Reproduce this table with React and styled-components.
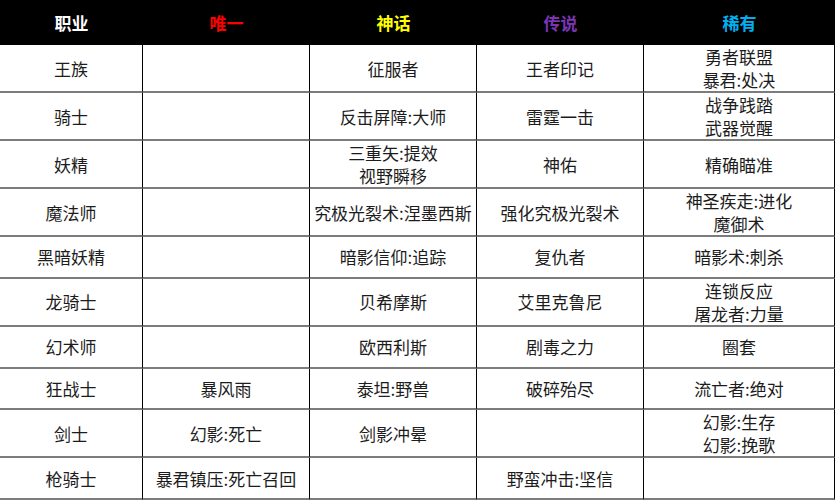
import React from 'react'
import styled, { createGlobalStyle } from 'styled-components'

const GlobalStyle = createGlobalStyle`
  html, body {
    margin: 0;
    padding: 0;
    background: #fff;
  }
  body {
    font-family: "Noto Sans CJK SC", "Liberation Sans", sans-serif;
  }
`

const headers = [
  { label: '职业', color: '#ffffff' },
  { label: '唯一', color: '#ff0000' },
  { label: '神话', color: '#ffff00' },
  { label: '传说', color: '#7a34b4' },
  { label: '稀有', color: '#00b0f0' }
]

const rows = [
  ['王族', '', '征服者', '王者印记', ['勇者联盟', '暴君:处决']],
  ['骑士', '', '反击屏障:大师', '雷霆一击', ['战争践踏', '武器觉醒']],
  ['妖精', '', ['三重矢:提效', '视野瞬移'], '神佑', '精确瞄准'],
  ['魔法师', '', '究极光裂术:涅墨西斯', '强化究极光裂术', ['神圣疾走:进化', '魔御术']],
  ['黑暗妖精', '', '暗影信仰:追踪', '复仇者', '暗影术:刺杀'],
  ['龙骑士', '', '贝希摩斯', '艾里克鲁尼', ['连锁反应', '屠龙者:力量']],
  ['幻术师', '', '欧西利斯', '剧毒之力', '圈套'],
  ['狂战士', '暴风雨', '泰坦:野兽', '破碎殆尽', '流亡者:绝对'],
  ['剑士', '幻影:死亡', '剑影冲晕', '', ['幻影:生存', '幻影:挽歌']],
  ['枪骑士', '暴君镇压:死亡召回', '', '野蛮冲击:坚信', '']
]

export default function App() {
  return (
    <>
      <GlobalStyle />
      <Table>
        {headers.map(h => (
          <HeadCell key={h.label} $color={h.color}>{h.label}</HeadCell>
        ))}
        {rows.map((row, r) =>
          row.map((cell, c) => (
            <Cell key={`${r}-${c}`}>
              {Array.isArray(cell)
                ? cell.map(line => <Line key={line}>{line}</Line>)
                : cell}
            </Cell>
          ))
        )}
      </Table>
    </>
  )
}

const Table = styled.div`
  display: grid;
  grid-template-columns: 143px 167px 167px 167px 191px;
  grid-template-rows: 45px repeat(10, 1fr);
  width: 835px;
  height: 500px;
  background: #fff;
`

const HeadCell = styled.div`
  display: flex;
  align-items: center;
  justify-content: center;
  background: #000;
  color: ${p => p.$color};
  font-size: 17px;
  font-weight: 700;
  padding-bottom: 1px;
  &:last-of-type {
    margin-right: -1px;
  }
`

const Cell = styled.div`
  box-sizing: border-box;
  display: flex;
  flex-direction: column;
  align-items: center;
  justify-content: center;
  border-right: 1.5px solid #000;
  border-bottom: 2px solid #7c7c7c;
  color: #1c1c1c;
  font-size: 17px;
  line-height: 23px;
  white-space: nowrap;
  overflow: visible;
`

const Line = styled.div`
  line-height: 23px;
`
